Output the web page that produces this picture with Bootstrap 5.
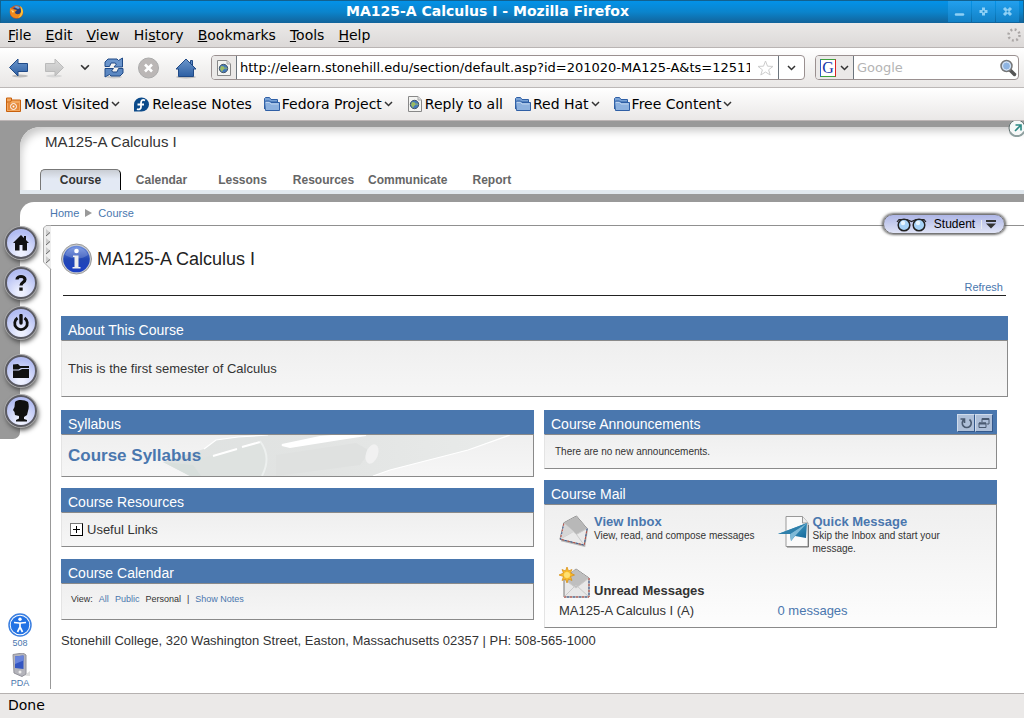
<!DOCTYPE html>
<html lang="en">
<head>
<meta charset="utf-8">
<meta name="viewport" content="width=device-width, initial-scale=1">
<title>MA125-A Calculus I</title>
<link href="https://cdn.jsdelivr.net/npm/bootstrap@5.3.0/dist/css/bootstrap.min.css" rel="stylesheet">
<style>
body{font-family:"Liberation Sans",Arial,sans-serif;font-size:13px;line-height:16px;color:#333;background:#fff}
a{color:#4a77ae;text-decoration:none}
svg{display:block;flex:none}
button{font:inherit;color:inherit;background:none;border:0;padding:0}
.chrome{font-family:"DejaVu Sans",sans-serif;font-size:14px;color:#000}
.chrome a{color:#000}
.titlebar{height:23px;background:linear-gradient(#0392e8,#0b84cc 50%,#12639a);border:1px solid #12618f;border-width:1px 1px 0;color:#fff;font-weight:bold;line-height:20px}
.win-btn{width:23px;height:21px;margin-left:1px;background:linear-gradient(#22a0ee,#1281c6);display:grid;place-items:center}
.menubar{height:25px;background:linear-gradient(#ebe9e8,#dcd9d8);border-bottom:1px solid #b9b4b3;gap:14px;padding:0 3px 0 8px}
.toolbar{height:40px;background:linear-gradient(#fff,#f3f2f1 50%,#e9e7e6);border-bottom:1px solid #bcb8b7;padding:0 5px 0 8px;gap:10px}
.nav-icons{gap:14px}
.bookbar{height:33px;background:linear-gradient(#fff,#eae8e7);border-bottom:1px solid #bcb5b5;padding:0 6px;gap:12px}
.bookbar a{display:flex;align-items:center;gap:2px}
.bookbar .arrow{margin-right:2px}
.field-box{height:25px;border:1px solid #9a9090;border-radius:4px;background:#fff;overflow:hidden}
.field-box input{border:0;outline:0;padding:0 3px;min-width:0;flex:1;background:transparent;color:#000;font-size:13px;height:23px}
.field-box input::placeholder{color:#b4b4b4;opacity:1}
.field-icon{background:#ebe9e8;display:flex;align-items:center;justify-content:center}
.search-box{width:204px}
.g-logo{width:16px;height:18px;border:1px solid;border-color:#3ca03c #dd2222 #3ca03c #2a5fd0;background:#fff;color:#1535a8;font:16px/16px "Liberation Serif",serif;text-align:center}
.top-wrap{background:#999;padding:6px 0 8px 20px;position:relative}
.top-panel{background:#fff;border-top-left-radius:20px;box-shadow:inset 5px 8px 8px -4px #c8c8c8;height:63px;padding:7px 0 0 20px;display:flex;flex-direction:column;justify-content:space-between}
.course-name{font-size:15px;padding-left:5px}
.tabs{display:flex;border:0}
.tabs a{min-width:81px;padding:0 4px;height:21px;line-height:22px;text-align:center;font-weight:bold;font-size:12px;color:#666}
.tabs a.current{border:1px solid #777;border-right-color:#000;border-bottom:0;border-radius:5px 5px 0 0;background:linear-gradient(#c9cdd4,#e3e9f4 9px);color:#333;line-height:20px}
.tab-line{height:4px;background:#e1e8ee}
.popout{position:absolute;right:-1px;top:-1px}
.crumb-wrap{background:#999;padding-left:20px}
.crumbs{height:23px;background:#fff;border-top-left-radius:14px;padding:0 0 2px 30px;gap:6px;font-size:11px}
.rail{width:50px;position:relative;padding:2px 0 0 5px;margin-bottom:4px}
.rail::before{content:"";position:absolute;left:0;top:0;width:20px;height:214px;background:#999;border-bottom-right-radius:7px}
.round-btn{width:32px;height:32px;border-radius:50%;border:2px solid #5a5a62;background:radial-gradient(circle at 50% 85%,#eef1ff 10%,#b3bdf2 75%);box-shadow:0 0 0 1px #aaa,1px 3px 5px #444;display:grid;place-items:center;margin-bottom:8px;position:relative}
.round-btn.last-of-set{margin-bottom:16px}
.rail-foot{font-size:9px;line-height:12px;width:30px;text-align:center}
.rail-foot svg{margin:auto}
.content{border-top:1px solid #909090;border-left:1px solid #999;padding:17px 16px 0 10px;position:relative;margin-bottom:4px}
.grip{position:absolute;left:-8px;top:-1px}
.role-btn{position:absolute;right:19px;top:-12px;height:20px;width:122px;border:1px solid #777;border-radius:10px;background:linear-gradient(#aeb6e6,#e0e4f6);box-shadow:-1px 0 3px #555,1px 0 3px #555;font-size:12px;color:#000}
.page-title{font-size:18px;line-height:32px;color:#222;gap:5px;margin:0;font-weight:normal}
.refresh-row{font-size:11px;margin:4px 2px 20px;padding-right:3px;border-bottom:1px solid #222;text-align:right}
.panel{margin-bottom:11px}
.panel.wide{margin-bottom:13px}
.panel-head{background:#4a77ae;color:#fff;height:24px;padding:4px 4px 0 7px;font-size:14px;line-height:20px;font-weight:normal;margin:0}
.panel-body{border:1px solid #8a8a8a;border-left-color:#e4e4e4;background:linear-gradient(#efefef,#f6f6f6);padding:0 6px;position:relative}
.h-about{height:57px}.h-syllabus{height:43px}.h-links{height:35px}
.h-mail{height:124px;padding-right:0;background:linear-gradient(#efefef,#fdfdfd)}
.h-cal{height:37px;font-size:9px;padding:7px 9px;display:flex;gap:6px}
.syl-link{font-size:17px;font-weight:bold;position:relative}
.nib{position:absolute;left:96px;top:0;height:41px;width:360px}
.cols{gap:10px}
.left-col{flex:473 1 0;min-width:0}
.right-col{flex:453 1 0;min-width:0;margin-right:11px}
.address{line-height:20px;white-space:nowrap}
.tiny-btn{width:18px;height:18px;margin-bottom:2px;background:#aebfd8;border:1px solid #d0dcec;border-right-color:#35598c;border-bottom-color:#35598c;display:grid;place-items:center}
.fine-print{font-size:10px;line-height:13px}
.plus-btn{width:13px;height:13px;border:1px solid #777;border-right-color:#000;border-bottom-color:#000;background:#fff;display:grid;place-items:center}
.mail-grid{display:grid;grid-template-columns:1fr 1fr;padding:10px 0 0 8px}
.mail-item{height:51px;line-height:14px}
.statusbar{height:25px;background:#ebe9e8;border-top:1px solid #b5b1b0;padding-left:8px;line-height:22px}
</style>
</head>
<body class="min-vh-100 d-flex flex-column">
<svg width="0" height="0" class="position-absolute" aria-hidden="true">
<defs>
<linearGradient id="gBlue" x2="0" y2="1"><stop stop-color="#6b96cb"/><stop offset="1" stop-color="#2d5fa3"/></linearGradient>
<linearGradient id="gGrey" x2="0" y2="1"><stop stop-color="#dadada"/><stop offset="1" stop-color="#c2c2c2"/></linearGradient>
<linearGradient id="gInfo" x2="0" y2="1"><stop stop-color="#6d8fe0"/><stop offset=".5" stop-color="#2348b4"/><stop offset="1" stop-color="#1c40c4"/></linearGradient>
<linearGradient id="gNib" x2="1" y2="0"><stop stop-color="#dfe2e1"/><stop offset=".45" stop-color="#e2e4e3"/><stop offset="1" stop-color="#e9ebea"/></linearGradient>
<linearGradient id="gPlane" x2="1" y2="1"><stop stop-color="#5cb8dc"/><stop offset="1" stop-color="#0d5f92"/></linearGradient>
<symbol id="chev" viewBox="0 0 9 6"><path d="M1 1l3.500 3.500L8 1" fill="none" stroke="#333" stroke-width="1.500"/></symbol>
<symbol id="folder" viewBox="0 0 16 15"><path d="M.500 12V1.500L1.500.500h4L7 2.500h6.500V5H.500z" fill="#7aa3d6" stroke="#2f5fa5"/><path d="M1.500 13.500L.500 5l1-1h4l1.500 1.500h8.500v8z" fill="#8db1de" stroke="#2f5fa5"/><path d="M2 5.500h3.500L7 7h7.500" fill="none" stroke="#bdd3ee"/></symbol>
<symbol id="pageglobe" viewBox="0 0 16 16"><path d="M1.500.500h9.500L14.500 4v11.500h-13z" fill="#f4f4f2" stroke="#888"/><path d="M11 .500V4h3.500" fill="#ddd" stroke="#aaa"/><circle cx="7.500" cy="8.500" r="4.200" fill="#4379bd" stroke="#456"/><path d="M5 6l3 .500 1 2-2 1.500-1 2-2-3z" fill="#9cbb62"/><path d="M9.500 6.500l1.500 2-1.500 1z" fill="#9cbb62"/></symbol>
<symbol id="envelope" viewBox="0 0 32 34"><path d="M6 9L19 2l11 13-3 18L2 27z" fill="#777" opacity=".5"/><path d="M5 8L18 1l11 13-3 17L1 25z" fill="#e9e9e9" stroke="#777"/><path d="M5 8L18 1l11 13-11 6z" fill="#b8b8b8"/><path d="M5 8l13 12 11-6M1 25l14-8M26 31l-8-11" fill="none" stroke="#c9c9c9"/><path d="M5 9l10 8L1 25z" fill="#d6d6d6"/><path d="M5 9L1.500 25 26 31l3-17" fill="none" stroke="#c34a42" stroke-dasharray="2 4"/><path d="M5 9L1.500 25 26 31l3-17" fill="none" stroke="#3d5c9a" stroke-dasharray="2 4" stroke-dashoffset="3"/></symbol>
</defs></svg>

<header class="chrome">
 <div class="titlebar d-flex align-items-stretch">
  <svg class="ms-2 mt-1" width="15" height="14" viewBox="0 0 15 14"><circle cx="7.500" cy="7" r="6.800" fill="#d4581c"/><circle cx="8" cy="6" r="4.400" fill="#263e78"/><path d="M5 2c2-2 5-1 6 1L9 4z" fill="#6aa5db"/><path d="M1 3l3 1 4 1-2 2c0 3 5 3 6 0 1 4-2 6-5 6S0 10 1 3z" fill="#f18a1c"/><path d="M11 1c3 2 4 6 2 9-1 2-3 3-4 3 3-3 4-7 2-12z" fill="#f8c63c"/><path d="M2 5l3 1-1 2z" fill="#ffe28a"/></svg>
  <div class="flex-grow-1 text-center ps-1">MA125-A Calculus I - Mozilla Firefox</div>
  <button class="win-btn" aria-label="Minimize"><svg width="11" height="11"><path d="M2 8.500h7" stroke="#8ed0f5" stroke-width="2.500" stroke-linecap="round"/></svg></button>
  <button class="win-btn" aria-label="Maximize"><svg width="11" height="11"><path d="M1.500 5.500h8M5.500 1.500v8" stroke="#8ed0f5" stroke-width="3"/><circle cx="5.500" cy="5.500" r="1" fill="#178ad0"/></svg></button>
  <button class="win-btn me-1" aria-label="Close"><svg width="11" height="11"><path d="M2 2l7 7M9 2L2 9" stroke="#8ed0f5" stroke-width="3"/><circle cx="5.500" cy="5.500" r="1" fill="#178ad0"/></svg></button>
 </div>
 <nav class="menubar d-flex align-items-center">
  <a href="#"><u>F</u>ile</a><a href="#"><u>E</u>dit</a><a href="#"><u>V</u>iew</a><a href="#">Hi<u>s</u>tory</a><a href="#"><u>B</u>ookmarks</a><a href="#"><u>T</u>ools</a><a href="#"><u>H</u>elp</a>
  <svg class="ms-auto" width="14" height="14" viewBox="0 0 14 14"><circle cx="7" cy="7" r="5.500" fill="none" stroke="#aaa6a5" stroke-width="2.500" stroke-dasharray="1.900 2.420"/></svg>
 </nav>
 <div class="toolbar d-flex align-items-center">
  <div class="nav-icons d-flex align-items-center me-1">
  <button aria-label="Back"><svg width="22" height="22" viewBox="0 0 22 22"><ellipse cx="12" cy="19" rx="8" ry="1.500" fill="#bbb"/><path d="M1.500 10.500L10 2v4.500h9.500v8H10V19z" fill="url(#gBlue)" stroke="#204a87"/></svg></button>
  <button aria-label="Forward"><svg width="22" height="22" viewBox="0 0 22 22"><ellipse cx="10" cy="19" rx="8" ry="1.500" fill="#d8d8d8"/><path d="M19.500 10.500L11 2v4.500H1.500v8H11V19z" fill="url(#gGrey)" stroke="#bbb"/></svg></button>
  <button aria-label="Recent pages"><svg width="10" height="7"><use href="#chev"/></svg></button>
  <button aria-label="Reload"><svg width="20" height="22" viewBox="0 0 20 22"><ellipse cx="10" cy="20" rx="8" ry="1.500" fill="#ccc"/><path d="M1 9.500V5l3-3h9l1.500 1.500L18.500 1v9H10l2.500-3L11 6H7L5.500 9.500z" fill="#6a94cb" stroke="#204a87"/><path d="M19 11.500V16l-3 3H7l-1.500-1.500L1 20v-8.500h8.500L7.500 14l1.500 1h4l1.500-3.500z" fill="#5c88c2" stroke="#204a87"/></svg></button>
  <button aria-label="Stop"><svg width="21" height="22" viewBox="0 0 21 22"><circle cx="10.500" cy="11" r="10" fill="#bbb7b6" stroke="#aaa"/><path d="M7 7.500l7 7m0-7l-7 7" stroke="#fff" stroke-width="2.600"/></svg></button>
  <button aria-label="Home"><svg width="24" height="22" viewBox="0 0 24 22"><ellipse cx="13" cy="20" rx="10" ry="1.500" fill="#bbb"/><path d="M17.500 3.500v3l2 2v-5zM13 2L3 12h2.500v7.500h15V12H23z" fill="url(#gBlue)" stroke="#204a87"/></svg></button>
  </div>
  <div class="field-box d-flex flex-grow-1 align-items-stretch">
   <span class="field-icon px-1 border-end border-secondary"><svg width="16" height="16"><use href="#pageglobe"/></svg></span>
   <input type="text" aria-label="Address" value="http://elearn.stonehill.edu/section/default.asp?id=201020-MA125-A&amp;ts=12511">
   <svg class="mt-1 ms-1 me-1" width="17" height="16" viewBox="0 0 17 16"><path d="M8.500 1l2 5.200 5.500.200-4.400 3.400 1.600 5.200-4.700-3-4.700 3 1.600-5.200L1 6.400l5.500-.200z" fill="#fff" stroke="#ccc"/></svg>
   <button class="px-2 border-start border-secondary" aria-label="Address history"><svg width="9" height="6"><use href="#chev"/></svg></button>
  </div>
  <div class="field-box search-box d-flex align-items-stretch flex-shrink-0">
   <button class="field-icon px-1 border-end border-secondary" aria-label="Search engine"><span class="g-logo">G</span><svg class="ms-1" width="9" height="6"><use href="#chev"/></svg></button>
   <input type="text" placeholder="Google" aria-label="Search">
   <button aria-label="Search the web"><svg width="19" height="18" viewBox="0 0 19 18"><path d="M10.500 10.500l5 5" stroke="#555" stroke-width="3.500" stroke-linecap="round"/><circle cx="7.500" cy="7" r="5.500" fill="#a9c6ea" stroke="#777" stroke-width="1.500"/><circle cx="7.500" cy="7" r="4" fill="#8eb4e2" stroke="#dbe7f5"/></svg></button>
  </div>
 </div>
 <nav class="bookbar d-flex align-items-center">
  <a href="#"><svg width="16" height="15" viewBox="0 0 16 15"><path d="M.500 1h5v2h9v11.500H.500z" fill="#f3a860" stroke="#c8600c"/><path d="M.500 5h4l1-2" fill="none" stroke="#c8600c"/><path d="M2 6h11v7H2z" fill="#e68a3c"/><circle cx="7.500" cy="9.500" r="3" fill="none" stroke="#fff"/><circle cx="7.500" cy="9.500" r="1" fill="#fff"/></svg>Most Visited<svg class="arrow" width="9" height="6"><use href="#chev"/></svg></a>
  <a href="#"><svg width="16" height="15" viewBox="0 0 16 15"><path d="M0 14V7.500a7.500 7 0 1 1 7.500 7H0z" fill="#0b4a8a"/><path d="M11 3.500C8.500 2 7 3.500 7 6v4c0 2-2 3-4 2M3.500 7.500H10" fill="none" stroke="#fff" stroke-width="1.800"/></svg>Release Notes</a>
  <a href="#"><svg width="16" height="15"><use href="#folder"/></svg>Fedora Project<svg class="arrow" width="9" height="6"><use href="#chev"/></svg></a>
  <a href="#"><svg width="16" height="16"><use href="#pageglobe"/></svg>Reply to all</a>
  <a href="#"><svg width="16" height="15"><use href="#folder"/></svg>Red Hat<svg class="arrow" width="9" height="6"><use href="#chev"/></svg></a>
  <a href="#"><svg width="16" height="15"><use href="#folder"/></svg>Free Content<svg class="arrow" width="9" height="6"><use href="#chev"/></svg></a>
 </nav>
</header>

<section class="top-wrap overflow-hidden">
 <div class="top-panel">
  <div class="course-name">MA125-A Calculus I</div>
  <nav class="tabs"><a href="#" class="current">Course</a><a href="#">Calendar</a><a href="#">Lessons</a><a href="#">Resources</a><a href="#">Communicate</a><a href="#">Report</a></nav>
 </div>
 <div class="tab-line"></div>
 <button class="popout" aria-label="Open in new window"><svg width="17" height="17" viewBox="0 0 17 17"><circle cx="9" cy="8" r="8" fill="#f6f8f8" stroke="#5d6d6d"/><path d="M2 12a8 8 0 0 0 14 0" fill="none" stroke="#8fa0a0" stroke-width="2"/><path d="M7 11l5-5M7.500 5H13v5.500" fill="none" stroke="#2b8783" stroke-width="1.600"/></svg></button>
</section>
<div class="crumb-wrap"><nav class="crumbs d-flex align-items-center"><a href="#">Home</a><svg width="7" height="8"><path d="M0 0l7 4-7 4z" fill="#999"/></svg><a href="#">Course</a></nav></div>

<div class="d-flex flex-grow-1">
 <aside class="rail d-flex flex-column flex-shrink-0">
  <button class="round-btn" aria-label="Home"><svg width="18" height="18" viewBox="0 0 18 18"><path d="M9 1L1 9h2v7.500h4.500V11h3v5.500H15V9h2l-3-3V2h-2v2z" fill="#111"/></svg></button>
  <button class="round-btn" aria-label="Help"><svg width="14" height="18" viewBox="0 0 14 18"><path d="M3 5.500C3 1.500 11 1.500 11 5.500 11 8.500 7 8 7 11.500" fill="none" stroke="#111" stroke-width="3.200"/><path d="M5.300 13.500h3.400v3.200H5.300z" fill="#111"/></svg></button>
  <button class="round-btn last-of-set" aria-label="Log off"><svg width="18" height="18" viewBox="0 0 18 18"><path d="M5.500 4a6.300 6.300 0 1 0 7 0" fill="none" stroke="#111" stroke-width="2.800"/><path d="M9 1.500v7.500" stroke="#111" stroke-width="3.400" stroke-linecap="round"/></svg></button>
  <button class="round-btn" aria-label="Files"><svg width="18" height="16" viewBox="0 0 18 16"><path d="M1 1.500l5-.500 2 2h9v2H9L6.500 6.500H1z" fill="#111"/><path d="M1 7.500h6l3-1.500h7v9H1z" fill="#111"/></svg></button>
  <button class="round-btn" aria-label="Profile"><svg width="20" height="24" viewBox="0 0 20 24"><path d="M4 3c3-3 10-2 13 0 1 3 1 6 0 9l-1 4-3 2v2l3 1v1.500H5V21l3-1.500V17l-4-1-.500-3L2 11l1.500-3z" fill="#111"/></svg></button>
  <div class="rail-foot mt-auto">
   <a href="#" class="d-block mb-1"><svg width="24" height="24" viewBox="0 0 24 24"><circle cx="12" cy="12" r="11" fill="#fff" stroke="#3b7fe0" stroke-width="1.500"/><circle cx="12" cy="12" r="9.300" fill="#2272e4"/><circle cx="12" cy="6.300" r="1.700" fill="#fff"/><path d="M6 9.500l5 .500h2l5-.500M12 10v4l-2.500 5M12 14l2.500 5" fill="none" stroke="#fff" stroke-width="1.700"/></svg>508</a>
   <a href="#" class="d-block"><svg width="22" height="24" viewBox="-2 0 22 24"><path d="M6 22h8l5-4v5z" fill="#ddd"/><path d="M2 1.500L12 0l3 2v19l-4 2.500L3 20z" fill="#b4b4bb" stroke="#92929a"/><path d="M4 3.500l8.500-1V16L4 15z" fill="#3456c2"/><path d="M4 3.500l8.500-1v5L4 11z" fill="#6884dc"/><circle cx="9" cy="19" r="1.500" fill="#eee"/></svg>PDA</a>
  </div>
 </aside>
 <main class="content flex-grow-1">
  <svg class="grip" width="9" height="45" viewBox="0 0 9 45"><path d="M8 .500H3L.500 3v34L8 44.500" fill="#eee" stroke="#aaa"/><path d="M3 4v7l4-3.500zM3 13v7l4-3.500zM3 22v7l4-3.500zM3 31v7l4-3.500z" fill="#ccc"/><path d="M3 11l4-3.500M3 20l4-3.500M3 29l4-3.500M3 38l4-3.500" stroke="#666"/></svg>
  <button class="role-btn d-flex align-items-center">
   <svg class="ms-2" width="36" height="16" viewBox="-4 0 36 16"><circle cx="8" cy="9" r="5.800" fill="#a6d2f7" stroke="#222" stroke-width="1.500"/><circle cx="23" cy="9" r="5.800" fill="#a6d2f7" stroke="#222" stroke-width="1.500"/><path d="M1 6l2-2.500h8l4.500 2 4.500-2h8L30 6" fill="none" stroke="#222" stroke-width="1.200"/><circle cx="7" cy="7" r="2.200" fill="#e6f5ff"/><circle cx="22" cy="7" r="2.200" fill="#e6f5ff"/></svg>
   <span class="flex-grow-1 text-center">Student</span>
   <span class="border-start border-secondary-subtle ps-1 me-2"><svg width="10" height="9"><path d="M0 1h10" stroke="#333" stroke-width="2"/><path d="M0 3.500h10L7.500 6 5 8.500 2.500 6z" fill="#333"/></svg></span>
  </button>
  <h1 class="page-title d-flex align-items-center"><svg width="31" height="32" viewBox="0 0 31 32"><circle cx="15.500" cy="16" r="15" fill="#c9ccd0" stroke="#999"/><circle cx="15.500" cy="16" r="13.300" fill="url(#gInfo)"/><path d="M4 12a12 11 0 0 1 23 0q-10 7-23 0z" fill="#fff" opacity=".18"/><circle cx="15.500" cy="8" r="2.300" fill="#fff"/><path d="M12 12.500h5.500V24h2v1.500h-8V24h2V14H12z" fill="#eee"/></svg>MA125-A Calculus I</h1>
  <div class="refresh-row"><a href="#">Refresh</a></div>

  <section class="panel wide"><h2 class="panel-head d-flex align-items-center">About This Course</h2>
   <div class="panel-body h-about d-flex align-items-center">This is the first semester of Calculus</div></section>

  <div class="cols d-flex">
   <div class="left-col">
    <section class="panel"><h2 class="panel-head d-flex align-items-center">Syllabus</h2>
     <div class="panel-body h-syllabus d-flex align-items-center overflow-hidden">
      <svg class="nib" viewBox="0 0 360 41"><path d="M5 27L46 14 58 5 80 2 110 0H350L310 15 232 35 215 41H32z" fill="url(#gNib)"/><path d="M46 14L58 5 80 2 110 0h-6M215 41l17-6 78-20 42-15" fill="none" stroke="#fff" stroke-width="1.200"/><path d="M20 29L60 19 104 8q10 16 2 33H36z" fill="#dee2e0"/><path d="M55 21l24-7M84 12l18-5M124 10l38-8 24-2h22l-26 4-50 8z" stroke="#fff" stroke-width="2" fill="#fff"/><path d="M102 6q12 16 2 35" fill="none" stroke="#edf0ef" stroke-width="2"/><path d="M118 20l80-12 14 8-10 14-84 11z" fill="#dfe1e0"/><ellipse cx="214" cy="19" rx="6" ry="10" transform="rotate(20 214 19)" fill="#f4f4f4" opacity=".8"/><path d="M5 27l30 3 8 11H32z" fill="#d8dfdc"/></svg>
      <a href="#" class="syl-link">Course Syllabus</a></div></section>
    <section class="panel mb-0 pb-1"><h2 class="panel-head d-flex align-items-center">Course Resources</h2>
     <div class="panel-body h-links d-flex align-items-center ps-2"><button class="plus-btn me-1" aria-label="Expand"><svg width="9" height="9"><path d="M1 4.500h7M4.500 1v7" stroke="#000"/></svg></button>Useful Links</div></section>
    <section class="panel pt-2"><h2 class="panel-head d-flex align-items-center">Course Calendar</h2>
     <div class="panel-body h-cal"><span>View:</span><a href="#">All</a><a href="#">Public</a><span>Personal</span><span>|</span><a href="#">Show Notes</a></div></section>
    <div class="address">Stonehill College, 320 Washington Street, Easton, Massachusetts 02357 | PH: 508-565-1000</div>
   </div>
   <div class="right-col">
    <section class="panel"><h2 class="panel-head d-flex align-items-center">Course Announcements
      <button class="tiny-btn ms-auto" aria-label="Reload announcements"><svg width="14" height="14" viewBox="0 0 14 14"><path d="M5 3.500a4.500 4.500 0 1 0 5.500 0M1.500 3h4v4" fill="none" stroke="#4a5a70" stroke-width="1.600"/></svg></button>
      <button class="tiny-btn" aria-label="Open announcements"><svg width="14" height="14" viewBox="0 0 14 14"><path d="M5 6V2.500h7V8h-2" fill="none" stroke="#4a5a70"/><path d="M5 3h7M2 7.500h7" stroke="#4a5a70" stroke-width="2"/><path d="M2 7h7v4.500H2z" fill="none" stroke="#4a5a70"/></svg></button></h2>
     <div class="panel-body h-links fine-print d-flex align-items-center"><span class="px-1">There are no new announcements.</span></div></section>
    <section class="panel"><h2 class="panel-head d-flex align-items-center">Course Mail</h2>
     <div class="panel-body h-mail"><div class="mail-grid">
      <div class="mail-item d-flex"><svg class="me-1" width="31" height="33"><use href="#envelope"/></svg><div><a href="#" class="fw-bold">View Inbox</a><div class="fine-print">View, read, and compose messages</div></div></div>
      <div class="mail-item d-flex"><svg class="me-1" width="31" height="33" viewBox="0 0 31 33"><path d="M8 1.500h16.500L30 8v23.500H8z" fill="#fafafa" stroke="#999"/><path d="M30.500 10v22H9" fill="none" stroke="#777"/><path d="M24.500 1.500V8H30" fill="#eee" stroke="#999"/><path d="M0 19L29 8l-1 15-11-2-4 5-1-7z" fill="url(#gPlane)"/><path d="M13 26l-1-7L29 8 17 21z" fill="#7fb9d6"/><path d="M0 19L29 8 12 19z" fill="#2e7faa"/></svg><div class="flex-grow-1"><a href="#" class="fw-bold">Quick Message</a><div class="fine-print w-75">Skip the Inbox and start your message.</div></div></div>
      <div class="d-flex align-items-end"><svg class="me-1" width="31" height="33" viewBox="0 0 31 33"><path d="M5 13L17 3l13 9v19H5z" fill="#e8e8e8" stroke="#777"/><path d="M5 13L17 3l13 9-13 10z" fill="#bfbfbf"/><path d="M5 13l12 9 13-10M5 31l12-12 13 12" fill="none" stroke="#c9c9c9"/><path d="M5 31h25V12" fill="none" stroke="#c34a42" stroke-dasharray="2 4"/><path d="M5 31h25V12" fill="none" stroke="#3d5c9a" stroke-dasharray="2 4" stroke-dashoffset="3"/><path d="M8 1l1.500 4 3.500-1.500L11.500 7l4 2-4 1.500 1.500 4-3.500-1.500L8 17l-1.500-4L3 14.500l1.500-4L0 9l4.500-2L3 3.500 6.500 5z" fill="#f9bd2b" stroke="#d68910" stroke-width=".700"/><circle cx="8" cy="9" r="3" fill="#ffe070"/></svg><b>Unread Messages</b></div><div></div>
      <div class="pt-1">MA125-A Calculus I (A)</div><div class="pt-1"><a href="#">0 messages</a></div>
     </div></div></section>
   </div>
  </div>
 </main>
</div>
<footer class="chrome statusbar">Done</footer>
<script src="https://cdn.jsdelivr.net/npm/bootstrap@5.3.0/dist/js/bootstrap.bundle.min.js"></script>
</body>
</html>
